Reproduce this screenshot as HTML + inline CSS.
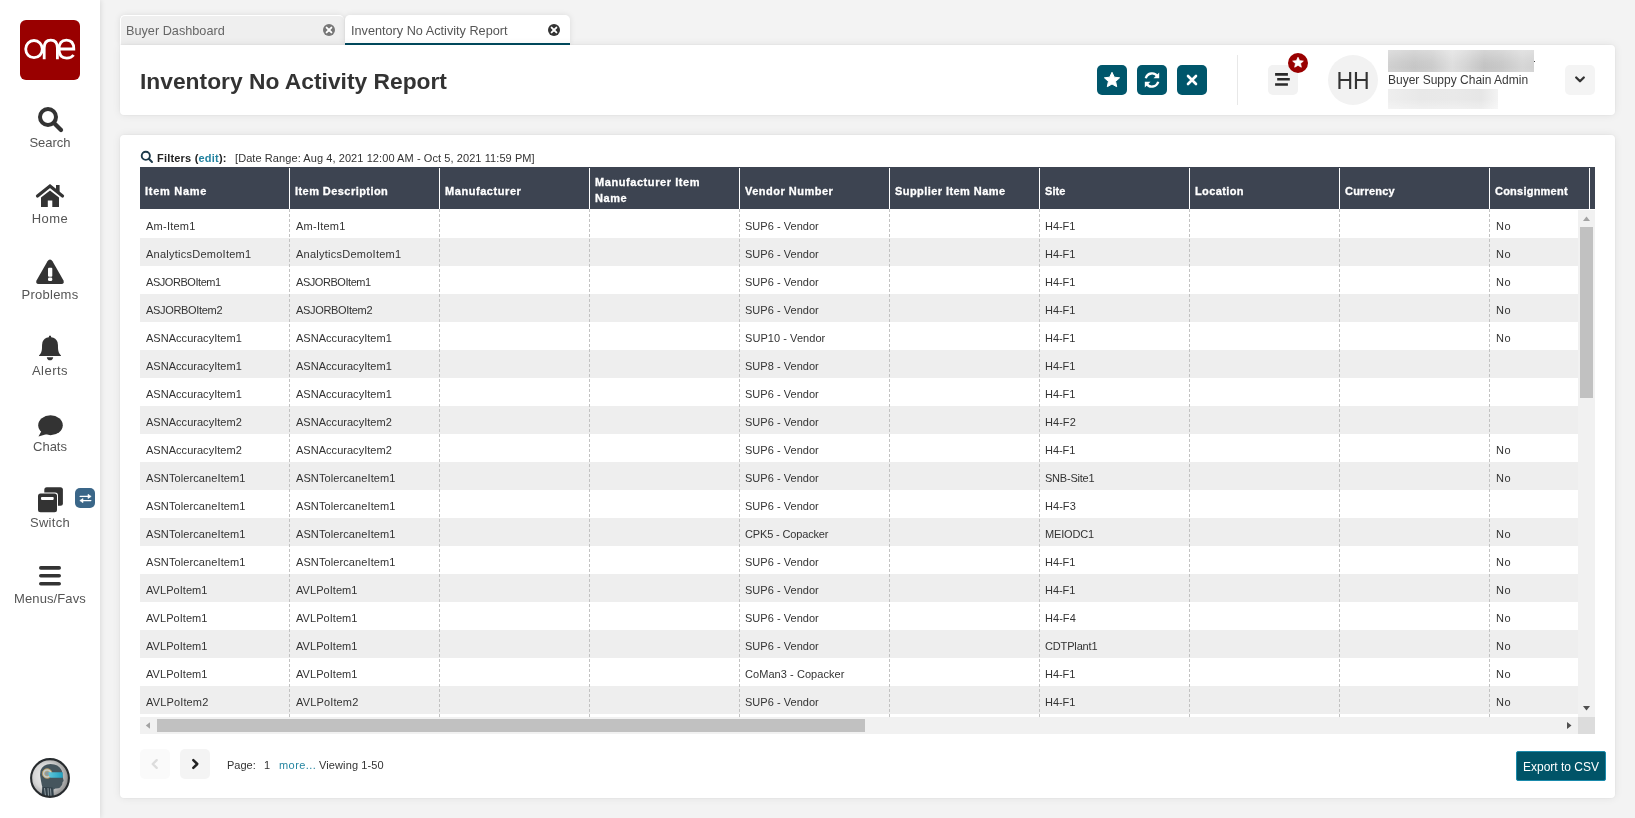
<!DOCTYPE html>
<html><head><meta charset="utf-8"><title>Inventory No Activity Report</title>
<style>
*{box-sizing:border-box;margin:0;padding:0}
html,body{width:1635px;height:818px;overflow:hidden}
body{background:#f3f3f3;font-family:"Liberation Sans",sans-serif;color:#333;position:relative}
.a{position:absolute;white-space:nowrap}
#side{position:absolute;left:0;top:0;width:100px;height:818px;background:#fff;box-shadow:1px 0 5px rgba(0,0,0,.10);z-index:2}
#logo{position:absolute;left:20px;top:20px;width:60px;height:60px;background:#990000;border-radius:6px}
.lbl{position:absolute;left:0;width:100px;text-align:center;font-size:13px;line-height:13px;color:#555}
svg{position:absolute;overflow:visible}
.tab{position:absolute;top:15px;height:30px;border-radius:5px 5px 0 0}
.tt{position:absolute;top:10px;font-size:12.7px;line-height:13px;color:#555;white-space:nowrap}
.card{position:absolute;background:#fff;border-radius:4px;box-shadow:0 0 2px rgba(30,10,10,.08),0 0 9px rgba(30,10,10,.08)}
.btn{position:absolute;width:30px;height:30px;border-radius:5px}
.th{position:absolute;top:167px;height:42px;background:#3d4451}
.hc{position:absolute;color:#fff;font-weight:bold;font-size:11px;line-height:16px;white-space:nowrap;letter-spacing:.6px;-webkit-text-stroke:.3px #fff}
.row{position:absolute;left:140px;width:1438px;height:28px}
.row.g{background:#eeeeee}
.c{position:absolute;top:0;height:28px;font-size:11px;line-height:32px;color:#333;white-space:nowrap;letter-spacing:.1px}
.vsep{position:absolute;top:209px;height:508px;width:1px;background:repeating-linear-gradient(to bottom,#c2c2c2 0,#c2c2c2 3px,transparent 3px,transparent 5px)}
.hsep{position:absolute;top:168px;height:41px;width:1px;background:#fff}

#root{position:absolute;left:0;top:0;width:1635px;height:818px;will-change:transform}

</style></head><body>
<div id="root">
<div id="side">
 <div id="logo"><svg width="60" height="60" style="left:0;top:0" viewBox="20 20 60 60"><g fill="none" stroke="#fff" stroke-width="2.8"><ellipse cx="34" cy="49.1" rx="8.3" ry="8.6"/><path d="M44.2 59.2 V48 Q44.2 40.1 50.8 40.1 Q57.4 40.1 57.4 48 V59.2"/><path d="M59 49 H73.8 Q73.8 40.1 66.4 40.1 Q59 40.1 59 49.3 Q59 58.1 66.7 58.1 Q71.3 58.1 73.6 55"/></g></svg></div>
 <!-- search -->
 <svg width="100" height="76" style="left:0;top:100px" viewBox="0 0 100 76"><circle cx="48" cy="17" r="8" fill="none" stroke="#333" stroke-width="4"/><line x1="54" y1="23" x2="61" y2="30" stroke="#333" stroke-width="4.2" stroke-linecap="round"/></svg>
 <div class="lbl" style="top:136px">Search</div>
 <!-- home -->
 <svg width="100" height="76" style="left:0;top:176px" viewBox="0 0 100 76"><path d="M37.5 20 L50 10 L62.5 20" fill="none" stroke="#333" stroke-width="3.2" stroke-linecap="round" stroke-linejoin="miter"/><rect x="56" y="9" width="3.6" height="7" fill="#333"/><path d="M41 21.5 L50 14.5 L59 21.5 V31 H52.3 V24.5 H47.8 V31 H41 Z" fill="#333"/></svg>
 <div class="lbl" style="top:212px;letter-spacing:0.5px">Home</div>
 <!-- problems -->
 <svg width="100" height="76" style="left:0;top:252px" viewBox="0 0 100 76"><path d="M50 7.5 Q51.5 7.5 52.5 9.2 L63.5 28.5 Q64.6 31.8 61.5 32 H38.5 Q35.4 31.8 36.5 28.5 L47.5 9.2 Q48.5 7.5 50 7.5 Z" fill="#333"/><rect x="48" y="15.8" width="4.3" height="9" rx="1" fill="#fff"/><rect x="48" y="25.5" width="4.3" height="3.6" rx="1.4" fill="#fff"/></svg>
 <div class="lbl" style="top:288px;letter-spacing:0.24px">Problems</div>
 <!-- alerts -->
 <svg width="100" height="76" style="left:0;top:328px" viewBox="0 0 100 76"><path d="M50 7.5 Q51.3 7.5 51.2 9.2 Q56 10 57.5 14 Q58 16 58 20 Q58 24.5 61 27.5 L61 28 H39 L39 27.5 Q42 24.5 42 20 Q42 16 42.5 14 Q44 10 48.8 9.2 Q48.7 7.5 50 7.5Z" fill="#333"/><path d="M46.8 29.2 H53.2 Q52.8 32.3 50 32.3 Q47.2 32.3 46.8 29.2Z" fill="#333"/></svg>
 <div class="lbl" style="top:364px;letter-spacing:0.5px">Alerts</div>
 <!-- chats -->
 <svg width="100" height="76" style="left:0;top:404px" viewBox="0 0 100 76"><ellipse cx="50.5" cy="21.3" rx="12.3" ry="10" fill="#333"/><path d="M38.5 32.5 L42 26 L47 30 Z" fill="#333"/></svg>
 <div class="lbl" style="top:440px">Chats</div>
 <!-- switch -->
 <svg width="100" height="76" style="left:0;top:480px" viewBox="0 0 100 76"><rect x="44.3" y="7.3" width="18.6" height="18.4" rx="2.5" fill="#333"/><rect x="37" y="12.6" width="21" height="20.7" rx="3" fill="#fff"/><rect x="38" y="13.6" width="19" height="18.7" rx="2.5" fill="#333"/><rect x="41" y="16.9" width="12.7" height="3" rx=".8" fill="#fff"/>
  <rect x="75" y="8" width="20" height="20" rx="5" fill="#3a6688"/><path d="M80.2 16.4 H89 M82 20.6 H90.8" stroke="#fff" stroke-width="1.4" stroke-linecap="round"/><path d="M88 14.3 L91.2 16.4 L88 18.5 Z M83 18.5 L79.8 20.6 L83 22.7 Z" fill="#fff" stroke="#fff" stroke-width=".6" stroke-linejoin="round"/></svg>
 <div class="lbl" style="top:516px;letter-spacing:0.3px">Switch</div>
 <!-- menus -->
 <svg width="100" height="76" style="left:0;top:556px" viewBox="0 0 100 76"><path d="M40.8 11.9 H59.2 M40.8 19.8 H59.2 M40.8 27.7 H59.2" stroke="#333" stroke-width="3.6" stroke-linecap="round"/></svg>
 <div class="lbl" style="top:592px;letter-spacing:0.1px">Menus/Favs</div>
 <!-- avatar -->
 <svg width="40" height="40" style="left:30px;top:758px" viewBox="0 0 40 40">
  <defs><radialGradient id="sg" cx="40%" cy="45%" r="60%"><stop offset="0" stop-color="#f2f2f2"/><stop offset=".55" stop-color="#d6d6d6"/><stop offset="1" stop-color="#8c8c8c"/></radialGradient>
  <linearGradient id="cy" x1="0" y1="0" x2="1" y2="0"><stop offset="0" stop-color="#5fc6da"/><stop offset="1" stop-color="#1f9fbf"/></linearGradient></defs>
  <circle cx="20" cy="20" r="18.9" fill="url(#sg)"/>
  <path d="M11 23 Q9.3 17 10.5 12.5 Q13 6.3 20.5 6 Q28.5 6 31.5 12 Q32.6 14.5 32.4 17.5 L33.6 22.6 Q33.8 23.6 32.6 24 L32.3 26 Q32.2 27.6 31 28 L30.2 29.6 Q28.6 30.6 25.5 30.5 L23.5 31.5 L23.8 38 L12 38 L12.6 30 Q11.6 26.5 11 23Z" fill="#45555d"/>
  <path d="M12.5 29 L22.5 29.5 L23.5 38 L11.5 38Z" fill="#33414a"/>
  <path d="M14.5 30 L15.5 38 M18 30 L18.5 38 M20.5 30.5 L21 38" stroke="#9aa6ab" stroke-width=".9"/>
  <circle cx="17.2" cy="15.5" r="4.8" fill="#c4ccd0" stroke="#b8985a" stroke-width=".9"/>
  <circle cx="17.2" cy="15.5" r="2.6" fill="#8a9aa2" stroke="#caa960" stroke-width=".6"/>
  <path d="M18.5 14.3 H32.6 L32.8 19.8 H21 Q18.5 19.5 18.5 14.3Z" fill="url(#cy)"/>
  <circle cx="20" cy="20" r="18.9" fill="none" stroke="#272b2e" stroke-width="2.1"/>
 </svg>
</div>
<!-- tabs -->
<div class="tab" style="left:120px;width:224px;background:#efefef;box-shadow:0 0 6px rgba(0,0,0,.10);border:1px solid #fff;border-bottom:0;border-right:0">
 <div class="tt" style="left:5px;top:9px;color:#666">Buyer Dashboard</div>
 <svg width="14" height="14" style="left:201px;top:7px" viewBox="0 0 14 14"><circle cx="7" cy="7" r="6" fill="#777"/><path d="M4.6 4.6 L9.4 9.4 M9.4 4.6 L4.6 9.4" stroke="#fff" stroke-width="1.9" stroke-linecap="round"/></svg>
</div>
<div class="tab" style="left:345px;width:225px;background:#fff;box-shadow:0 0 6px rgba(0,0,0,.10)">
 <div class="tt" style="left:6px">Inventory No Activity Report</div>
 <svg width="14" height="14" style="left:202px;top:8px" viewBox="0 0 14 14"><circle cx="7" cy="7" r="6" fill="#333"/><path d="M4.6 4.6 L9.4 9.4 M9.4 4.6 L4.6 9.4" stroke="#fff" stroke-width="1.9" stroke-linecap="round"/></svg>
 <div class="a" style="left:0;top:28px;width:225px;height:2px;background:#004c60"></div>
</div>
<!-- header card -->
<div class="card" style="left:120px;top:45px;width:1495px;height:70px;border-radius:0 4px 4px 4px">
 <div class="a" style="left:20px;top:24px;font-size:22.8px;line-height:24px;font-weight:bold;color:#333">Inventory No Activity Report</div>
 <div class="btn" style="left:977px;top:20px;background:#00566b"><svg width="30" height="30" style="left:0;top:0" viewBox="0 0 30 30"><path d="M15 7.3 L17.3 12.2 L22.6 12.8 L18.6 16.4 L19.7 21.7 L15 19 L10.3 21.7 L11.4 16.4 L7.4 12.8 L12.7 12.2 Z" fill="#fff" stroke="#fff" stroke-width="1" stroke-linejoin="round"/></svg></div>
 <div class="btn" style="left:1017px;top:20px;background:#00566b"><svg width="30" height="30" style="left:0;top:0" viewBox="0 0 30 30"><path d="M8.8 13.2 A6.5 6.5 0 0 1 20.6 11.5" fill="none" stroke="#fff" stroke-width="2.4"/><path d="M22.2 7.5 V13.3 H16.5 Z" fill="#fff"/><path d="M21.2 16.8 A6.5 6.5 0 0 1 9.4 18.5" fill="none" stroke="#fff" stroke-width="2.4"/><path d="M7.8 22.5 V16.7 H13.5 Z" fill="#fff"/></svg></div>
 <div class="btn" style="left:1057px;top:20px;background:#00566b"><svg width="30" height="30" style="left:0;top:0" viewBox="0 0 30 30"><path d="M11 11 L19 19 M19 11 L11 19" stroke="#fff" stroke-width="2.6" stroke-linecap="round"/></svg></div>
 <div class="a" style="left:1117px;top:10px;width:1px;height:50px;background:#e8e8e8"></div>
 <div class="btn" style="left:1148px;top:20px;background:#f2f2f2"><svg width="30" height="30" style="left:0;top:0" viewBox="0 0 30 30"><path d="M7.1 9.4 H19.9 M9.2 14.3 H21.8 M7.1 19.5 H19.9" stroke="#2a2a2a" stroke-width="2.6"/></svg></div>
 <svg width="22" height="22" style="left:1167px;top:7px" viewBox="0 0 22 22"><circle cx="11" cy="11" r="10" fill="#990000"/><path d="M11 5.3 L12.6 8.7 L16.3 9.1 L13.5 11.6 L14.3 15.2 L11 13.3 L7.7 15.2 L8.5 11.6 L5.7 9.1 L9.4 8.7 Z" fill="#fff" stroke="#fff" stroke-width=".8" stroke-linejoin="round"/></svg>
 <div class="a" style="left:1208px;top:10px;width:50px;height:50px;border-radius:25px;background:#f2f2f2"></div>
 <div class="a" style="left:1208px;top:24px;width:50px;text-align:center;font-size:23px;line-height:24px;color:#333">HH</div>
 <div class="a" style="left:1268px;top:5px;width:146px;height:22px;background:linear-gradient(to bottom,rgba(255,255,255,.30),rgba(255,255,255,.05) 55%,rgba(255,255,255,0) 80%,rgba(255,255,255,.08)),linear-gradient(90deg,#d0d0d0 0%,#c6c6c6 18%,#cbcbcb 30%,#dedede 44%,#d6d6d6 52%,#c3c3c3 66%,#c8c8c8 78%,#d6d6d6 92%,#d2d2d2 100%)"></div>
 <div class="a" style="left:1414px;top:16px;width:1px;height:1px;background:#444"></div>
 <div class="a" style="left:1268px;top:29px;font-size:12px;line-height:12px;color:#3a3a3a">Buyer Suppy Chain Admin</div>
 <div class="a" style="left:1268px;top:44px;width:110px;height:20px;background:linear-gradient(to bottom,rgba(255,255,255,0),rgba(255,255,255,0) 50%,rgba(255,255,255,.35)),linear-gradient(90deg,#eeeeee 0%,#e8e8e8 30%,#e9e9e9 60%,#e6e6e6 85%,#f3f3f3 100%)"></div>
 <div class="btn" style="left:1445px;top:20px;background:#f4f4f4"><svg width="30" height="30" style="left:0;top:0" viewBox="0 0 30 30"><path d="M11.2 12.5 L15 16.3 L18.8 12.5" fill="none" stroke="#333" stroke-width="2.3" stroke-linecap="round" stroke-linejoin="round"/></svg></div>
</div>
<div class="card" style="left:120px;top:135px;width:1495px;height:663px"></div>
<svg width="14" height="14" style="left:140px;top:150px" viewBox="0 0 14 14"><circle cx="5.8" cy="5.8" r="4.1" fill="none" stroke="#1d3a4a" stroke-width="1.9"/><line x1="8.8" y1="8.8" x2="12" y2="12" stroke="#1d3a4a" stroke-width="2" stroke-linecap="round"/></svg>
<div class="a" style="left:157px;top:153px;font-size:11px;line-height:11px;color:#222;letter-spacing:.2px"><b>Filters (</b><b style="color:#2182a0">edit</b><b>):</b></div>
<div class="a" style="left:235px;top:153px;font-size:11px;line-height:11px;color:#333;letter-spacing:.08px">[Date Range: Aug 4, 2021 12:00 AM - Oct 5, 2021 11:59 PM]</div>
<div class="th" style="left:140px;width:1455px">
<div class="hc" style="left:5px;top:16px;letter-spacing:0.72px">Item Name</div>
<div class="hc" style="left:155px;top:16px;letter-spacing:0.44px">Item Description</div>
<div class="hc" style="left:305px;top:16px;letter-spacing:0.56px">Manufacturer</div>
<div class="hc" style="left:455px;top:7px;letter-spacing:0.57px">Manufacturer Item<br>Name</div>
<div class="hc" style="left:605px;top:16px;letter-spacing:0.5px">Vendor Number</div>
<div class="hc" style="left:755px;top:16px;letter-spacing:0.43px">Supplier Item Name</div>
<div class="hc" style="left:905px;top:16px;letter-spacing:0.1px">Site</div>
<div class="hc" style="left:1055px;top:16px;letter-spacing:0.38px">Location</div>
<div class="hc" style="left:1205px;top:16px;letter-spacing:0.19px">Currency</div>
<div class="hc" style="left:1355px;top:16px;letter-spacing:0.23px">Consignment</div>
</div>
<div class="hsep" style="left:289px"></div>
<div class="hsep" style="left:439px"></div>
<div class="hsep" style="left:589px"></div>
<div class="hsep" style="left:739px"></div>
<div class="hsep" style="left:889px"></div>
<div class="hsep" style="left:1039px"></div>
<div class="hsep" style="left:1189px"></div>
<div class="hsep" style="left:1339px"></div>
<div class="hsep" style="left:1489px"></div>
<div class="hsep" style="left:1589px"></div>
<div class="row" style="top:210px"><div class="c" style="left:6px;letter-spacing:0.24px">Am-Item1</div><div class="c" style="left:156px;letter-spacing:0.24px">Am-Item1</div><div class="c" style="left:605px;letter-spacing:0.03px">SUP6 - Vendor</div><div class="c" style="left:905px;letter-spacing:-0.05px">H4-F1</div><div class="c" style="left:1356px;letter-spacing:0.6px">No</div></div>
<div class="row g" style="top:238px"><div class="c" style="left:6px;letter-spacing:0.25px">AnalyticsDemoItem1</div><div class="c" style="left:156px;letter-spacing:0.25px">AnalyticsDemoItem1</div><div class="c" style="left:605px;letter-spacing:0.03px">SUP6 - Vendor</div><div class="c" style="left:905px;letter-spacing:-0.05px">H4-F1</div><div class="c" style="left:1356px;letter-spacing:0.6px">No</div></div>
<div class="row" style="top:266px"><div class="c" style="left:6px;letter-spacing:-0.45px">ASJORBOItem1</div><div class="c" style="left:156px;letter-spacing:-0.45px">ASJORBOItem1</div><div class="c" style="left:605px;letter-spacing:0.03px">SUP6 - Vendor</div><div class="c" style="left:905px;letter-spacing:-0.05px">H4-F1</div><div class="c" style="left:1356px;letter-spacing:0.6px">No</div></div>
<div class="row g" style="top:294px"><div class="c" style="left:6px;letter-spacing:-0.32px">ASJORBOItem2</div><div class="c" style="left:156px;letter-spacing:-0.32px">ASJORBOItem2</div><div class="c" style="left:605px;letter-spacing:0.03px">SUP6 - Vendor</div><div class="c" style="left:905px;letter-spacing:-0.05px">H4-F1</div><div class="c" style="left:1356px;letter-spacing:0.6px">No</div></div>
<div class="row" style="top:322px"><div class="c" style="left:6px;letter-spacing:0.03px">ASNAccuracyItem1</div><div class="c" style="left:156px;letter-spacing:0.03px">ASNAccuracyItem1</div><div class="c" style="left:605px;letter-spacing:0.06px">SUP10 - Vendor</div><div class="c" style="left:905px;letter-spacing:-0.05px">H4-F1</div><div class="c" style="left:1356px;letter-spacing:0.6px">No</div></div>
<div class="row g" style="top:350px"><div class="c" style="left:6px;letter-spacing:0.03px">ASNAccuracyItem1</div><div class="c" style="left:156px;letter-spacing:0.03px">ASNAccuracyItem1</div><div class="c" style="left:605px;letter-spacing:0.03px">SUP8 - Vendor</div><div class="c" style="left:905px;letter-spacing:-0.05px">H4-F1</div></div>
<div class="row" style="top:378px"><div class="c" style="left:6px;letter-spacing:0.03px">ASNAccuracyItem1</div><div class="c" style="left:156px;letter-spacing:0.03px">ASNAccuracyItem1</div><div class="c" style="left:605px;letter-spacing:0.03px">SUP6 - Vendor</div><div class="c" style="left:905px;letter-spacing:-0.05px">H4-F1</div></div>
<div class="row g" style="top:406px"><div class="c" style="left:6px;letter-spacing:0.03px">ASNAccuracyItem2</div><div class="c" style="left:156px;letter-spacing:0.03px">ASNAccuracyItem2</div><div class="c" style="left:605px;letter-spacing:0.03px">SUP6 - Vendor</div><div class="c" style="left:905px;letter-spacing:0.05px">H4-F2</div></div>
<div class="row" style="top:434px"><div class="c" style="left:6px;letter-spacing:0.03px">ASNAccuracyItem2</div><div class="c" style="left:156px;letter-spacing:0.03px">ASNAccuracyItem2</div><div class="c" style="left:605px;letter-spacing:0.03px">SUP6 - Vendor</div><div class="c" style="left:905px;letter-spacing:-0.05px">H4-F1</div><div class="c" style="left:1356px;letter-spacing:0.6px">No</div></div>
<div class="row g" style="top:462px"><div class="c" style="left:6px;letter-spacing:0.1px">ASNTolercaneItem1</div><div class="c" style="left:156px;letter-spacing:0.1px">ASNTolercaneItem1</div><div class="c" style="left:605px;letter-spacing:0.03px">SUP6 - Vendor</div><div class="c" style="left:905px;letter-spacing:-0.22px">SNB-Site1</div><div class="c" style="left:1356px;letter-spacing:0.6px">No</div></div>
<div class="row" style="top:490px"><div class="c" style="left:6px;letter-spacing:0.1px">ASNTolercaneItem1</div><div class="c" style="left:156px;letter-spacing:0.1px">ASNTolercaneItem1</div><div class="c" style="left:605px;letter-spacing:0.03px">SUP6 - Vendor</div><div class="c" style="left:905px;letter-spacing:0.05px">H4-F3</div></div>
<div class="row g" style="top:518px"><div class="c" style="left:6px;letter-spacing:0.1px">ASNTolercaneItem1</div><div class="c" style="left:156px;letter-spacing:0.1px">ASNTolercaneItem1</div><div class="c" style="left:605px;letter-spacing:-0.15px">CPK5 - Copacker</div><div class="c" style="left:905px;letter-spacing:-0.15px">MEIODC1</div><div class="c" style="left:1356px;letter-spacing:0.6px">No</div></div>
<div class="row" style="top:546px"><div class="c" style="left:6px;letter-spacing:0.1px">ASNTolercaneItem1</div><div class="c" style="left:156px;letter-spacing:0.1px">ASNTolercaneItem1</div><div class="c" style="left:605px;letter-spacing:0.03px">SUP6 - Vendor</div><div class="c" style="left:905px;letter-spacing:-0.05px">H4-F1</div><div class="c" style="left:1356px;letter-spacing:0.6px">No</div></div>
<div class="row g" style="top:574px"><div class="c" style="left:6px;letter-spacing:0.05px">AVLPoItem1</div><div class="c" style="left:156px;letter-spacing:0.05px">AVLPoItem1</div><div class="c" style="left:605px;letter-spacing:0.03px">SUP6 - Vendor</div><div class="c" style="left:905px;letter-spacing:-0.05px">H4-F1</div><div class="c" style="left:1356px;letter-spacing:0.6px">No</div></div>
<div class="row" style="top:602px"><div class="c" style="left:6px;letter-spacing:0.05px">AVLPoItem1</div><div class="c" style="left:156px;letter-spacing:0.05px">AVLPoItem1</div><div class="c" style="left:605px;letter-spacing:0.03px">SUP6 - Vendor</div><div class="c" style="left:905px;letter-spacing:0.05px">H4-F4</div><div class="c" style="left:1356px;letter-spacing:0.6px">No</div></div>
<div class="row g" style="top:630px"><div class="c" style="left:6px;letter-spacing:0.05px">AVLPoItem1</div><div class="c" style="left:156px;letter-spacing:0.05px">AVLPoItem1</div><div class="c" style="left:605px;letter-spacing:0.03px">SUP6 - Vendor</div><div class="c" style="left:905px;letter-spacing:-0.15px">CDTPlant1</div><div class="c" style="left:1356px;letter-spacing:0.6px">No</div></div>
<div class="row" style="top:658px"><div class="c" style="left:6px;letter-spacing:0.05px">AVLPoItem1</div><div class="c" style="left:156px;letter-spacing:0.05px">AVLPoItem1</div><div class="c" style="left:605px;letter-spacing:0.06px">CoMan3 - Copacker</div><div class="c" style="left:905px;letter-spacing:-0.05px">H4-F1</div><div class="c" style="left:1356px;letter-spacing:0.6px">No</div></div>
<div class="row g" style="top:686px"><div class="c" style="left:6px;letter-spacing:0.15px">AVLPoItem2</div><div class="c" style="left:156px;letter-spacing:0.15px">AVLPoItem2</div><div class="c" style="left:605px;letter-spacing:0.03px">SUP6 - Vendor</div><div class="c" style="left:905px;letter-spacing:-0.05px">H4-F1</div><div class="c" style="left:1356px;letter-spacing:0.6px">No</div></div>
<div class="vsep" style="left:289px"></div>
<div class="vsep" style="left:439px"></div>
<div class="vsep" style="left:589px"></div>
<div class="vsep" style="left:739px"></div>
<div class="vsep" style="left:889px"></div>
<div class="vsep" style="left:1039px"></div>
<div class="vsep" style="left:1189px"></div>
<div class="vsep" style="left:1339px"></div>
<div class="vsep" style="left:1489px"></div>
<!-- v scrollbar -->
<div class="a" style="left:1578px;top:210px;width:17px;height:507px;background:#f1f1f1"></div>
<svg width="17" height="17" style="left:1578px;top:210px" viewBox="0 0 17 17"><path d="M5 11 L8.5 6.5 L12 11Z" fill="#a3a3a3"/></svg>
<div class="a" style="left:1580px;top:227px;width:13px;height:171px;background:#c1c1c1"></div>
<svg width="17" height="17" style="left:1578px;top:700px" viewBox="0 0 17 17"><path d="M5 6 L12 6 L8.5 10.5Z" fill="#505050"/></svg>
<!-- h scrollbar -->
<div class="a" style="left:140px;top:717px;width:1438px;height:17px;background:#f1f1f1"></div>
<svg width="17" height="17" style="left:140px;top:717px" viewBox="0 0 17 17"><path d="M10 5.2 L5.8 8.5 L10 11.8Z" fill="#a3a3a3"/></svg>
<div class="a" style="left:157px;top:719px;width:708px;height:13px;background:#c1c1c1"></div>
<svg width="17" height="17" style="left:1561px;top:717px" viewBox="0 0 17 17"><path d="M6 5 L10.5 8.5 L6 12Z" fill="#505050"/></svg>
<div class="a" style="left:1578px;top:717px;width:17px;height:17px;background:#dcdcdc"></div>
<!-- pagination -->
<div class="btn" style="left:140px;top:749px;background:#fafafa"><svg width="30" height="30" style="left:0;top:0" viewBox="0 0 30 30"><path d="M16.7 11.2 L12.7 15 L16.7 18.8" fill="none" stroke="#dcdcdc" stroke-width="2.4" stroke-linecap="round" stroke-linejoin="round"/></svg></div>
<div class="btn" style="left:180px;top:749px;background:#f4f4f4"><svg width="30" height="30" style="left:0;top:0" viewBox="0 0 30 30"><path d="M13.3 11.2 L17.3 15 L13.3 18.8" fill="none" stroke="#222" stroke-width="2.5" stroke-linecap="round" stroke-linejoin="round"/></svg></div>
<div class="a" style="left:227px;top:760px;font-size:11px;line-height:11px;color:#333">Page:</div>
<div class="a" style="left:264px;top:760px;font-size:11px;line-height:11px;color:#333">1</div>
<div class="a" style="left:279px;top:760px;font-size:11px;line-height:11px;color:#2585a0;letter-spacing:.45px">more...</div>
<div class="a" style="left:319px;top:760px;font-size:11px;line-height:11px;color:#333;letter-spacing:.12px">Viewing 1-50</div>
<div class="a" style="left:1516px;top:751px;width:90px;height:30px;background:#005468;border:1px solid #1a8aab;border-radius:2px"></div>
<div class="a" style="left:1516px;top:761px;width:90px;text-align:center;font-size:12px;line-height:12px;color:#fff">Export to CSV</div>
</div>
</body></html>
